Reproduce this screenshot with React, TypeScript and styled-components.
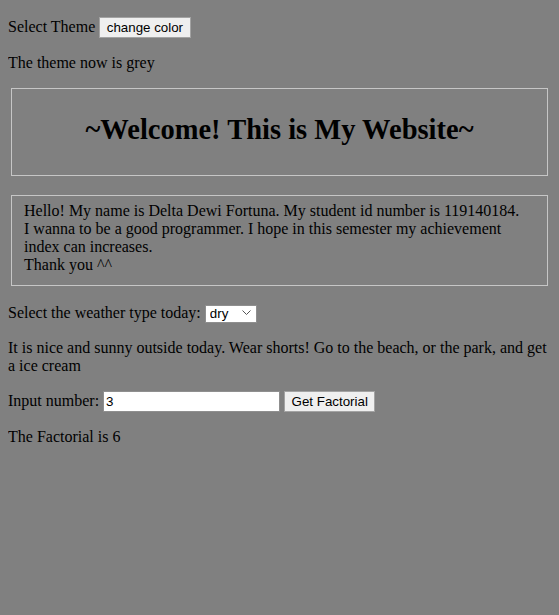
import React, { useState } from "react";
import styled, { createGlobalStyle } from "styled-components";

const GlobalStyle = createGlobalStyle`
  body {
    margin: 0 8px;
    background: #808080;
    color: #000;
    font-family: "Liberation Serif", "Times New Roman", serif;
    font-size: 16px;
  }
`;

const Paragraph = styled.p<{ $top?: number }>`
  margin: ${(p) => p.$top ?? 16}px 0 16px;
  line-height: normal;
`;

const Button = styled.button`
  font: 13.33px "Liberation Sans", Arial, sans-serif;
  color: #000;
  background: #efefef;
  border: 1px solid #a3a3a3;
  border-radius: 0;
  padding: 2px 6.5px;
  margin: 0;
`;

const Box = styled.fieldset<{ $top?: number }>`
  margin: ${(p) => p.$top ?? 0}px 3px 0;
  padding: 6px 12px 11px;
  border: 1px solid #c6c6c6;
`;

const Title = styled.h1`
  font-size: 28.5px;
  font-weight: bold;
  text-align: center;
  margin: 19px 0 18px;
`;

const Intro = styled.div`
  line-height: normal;
`;

const SelectWrap = styled.span`
  position: relative;
  display: inline-block;
  vertical-align: baseline;
`;

const Select = styled.select`
  appearance: none;
  font: 13.33px "Liberation Sans", Arial, sans-serif;
  color: #000;
  background: #fff;
  border: 1px solid #8f8f8f;
  border-radius: 0;
  width: 52px;
  height: 18px;
  padding: 0 0 0 4px;
  margin: 0;
`;

const Chevron = styled.svg`
  position: absolute;
  right: 6px;
  top: 6px;
  pointer-events: none;
`;

const NumberInput = styled.input`
  box-sizing: border-box;
  font: 13.33px "Liberation Sans", Arial, sans-serif;
  background: #fff;
  border: 1px solid #8f8f8f;
  width: 177px;
  height: 21px;
  padding: 0 2px;
  margin: 0;
`;

const messages: Record<string, string> = {
  dry: "It is nice and sunny outside today. Wear shorts! Go to the beach, or the park, and get a ice cream",
  wet: "It is raining outside; take a rain coat and an umbrella, and don't stay out for too long.",
  cold: "It is freezing cold outside. Wear a warm coat and a hat.",
};

function factorial(n: number): number {
  let result = 1;
  for (let i = 2; i <= n; i++) result *= i;
  return result;
}

export default function App() {
  const [theme, setTheme] = useState("grey");
  const [weather, setWeather] = useState("dry");
  const [value, setValue] = useState("3");
  const [result, setResult] = useState(6);

  return (
    <>
      <GlobalStyle />
      <Paragraph $top={17}>
        Select Theme{" "}
        <Button onClick={() => setTheme(theme === "grey" ? "white" : "grey")}>
          change color
        </Button>
      </Paragraph>
      <Paragraph>The theme now is {theme}</Paragraph>
      <Box>
        <Title>~Welcome! This is My Website~</Title>
      </Box>
      <br />
      <Box $top={1}>
        <Intro>
          Hello! My name is Delta Dewi Fortuna. My student id number is 119140184.
          <br />I wanna to be a good programmer. I hope in this semester my achievement index can
          increases.
          <br />
          Thank you ^^
        </Intro>
      </Box>
      <Paragraph $top={18}>
        Select the weather type today:{" "}
        <SelectWrap>
          <Select value={weather} onChange={(e) => setWeather(e.target.value)}>
            <option value="dry">dry</option>
            <option value="wet">wet</option>
            <option value="cold">cold</option>
          </Select>
          <Chevron width="9" height="5" viewBox="0 0 9 5">
            <path d="M0.5 0.5 L4.5 4.5 L8.5 0.5" fill="none" stroke="#555" strokeWidth="1" />
          </Chevron>
        </SelectWrap>
      </Paragraph>
      <Paragraph>{messages[weather]}</Paragraph>
      <Paragraph>
        Input number:{" "}
        <NumberInput value={value} onChange={(e) => setValue(e.target.value)} />{" "}
        <Button onClick={() => setResult(factorial(Number(value) || 0))}>Get Factorial</Button>
      </Paragraph>
      <Paragraph>The Factorial is {result}</Paragraph>
    </>
  );
}
